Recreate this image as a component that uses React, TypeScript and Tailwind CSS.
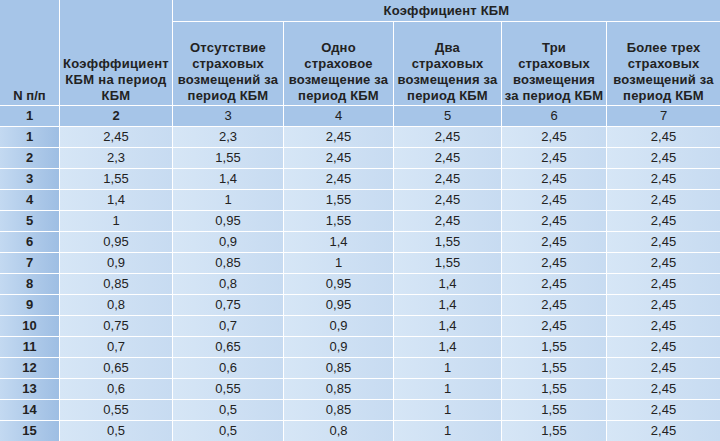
const headers: string[][] = [
  ['Отсутствие', 'страховых', 'возмещений за', 'период КБМ'],
  ['Одно', 'страховое', 'возмещение за', 'период КБМ'],
  ['Два', 'страховых', 'возмещения за', 'период КБМ'],
  ['Три', 'страховых', 'возмещения', 'за период КБМ'],
  ['Более трех', 'страховых', 'возмещений за', 'период КБМ'],
];

const rows: string[][] = [
  ['1', '2,45', '2,3', '2,45', '2,45', '2,45', '2,45'],
  ['2', '2,3', '1,55', '2,45', '2,45', '2,45', '2,45'],
  ['3', '1,55', '1,4', '2,45', '2,45', '2,45', '2,45'],
  ['4', '1,4', '1', '1,55', '2,45', '2,45', '2,45'],
  ['5', '1', '0,95', '1,55', '2,45', '2,45', '2,45'],
  ['6', '0,95', '0,9', '1,4', '1,55', '2,45', '2,45'],
  ['7', '0,9', '0,85', '1', '1,55', '2,45', '2,45'],
  ['8', '0,85', '0,8', '0,95', '1,4', '2,45', '2,45'],
  ['9', '0,8', '0,75', '0,95', '1,4', '2,45', '2,45'],
  ['10', '0,75', '0,7', '0,9', '1,4', '2,45', '2,45'],
  ['11', '0,7', '0,65', '0,9', '1,4', '1,55', '2,45'],
  ['12', '0,65', '0,6', '0,85', '1', '1,55', '2,45'],
  ['13', '0,6', '0,55', '0,85', '1', '1,55', '2,45'],
  ['14', '0,55', '0,5', '0,85', '1', '1,55', '2,45'],
  ['15', '0,5', '0,5', '0,8', '1', '1,55', '2,45'],
];

export default function App() {
  return (
    <div className="w-[720px] h-[441px] overflow-hidden bg-white font-['Liberation_Sans',Arial,sans-serif] text-[13px] text-[#222]">
      <div className="grid grid-cols-[59px_112px_110px_109px_107px_104px_1fr] grid-rows-[21px_83px_20px] auto-rows-[20px] gap-px bg-white">
        <div className="row-span-2 bg-[#a6c5e8] flex items-end justify-center pb-px font-bold leading-4">
          N п/п
        </div>
        <div className="row-span-2 bg-[#a6c5e8] flex items-end justify-center pb-px leading-4 text-center font-bold tracking-[0.3px]">
          <div>
            Коэфффициент
            <br />
            КБМ на период
            <br />
            КБМ
          </div>
        </div>
        <div className="col-span-5 bg-[#a6c5e8] flex items-center justify-center pt-px font-bold tracking-[0.2px]">
          Коэффициент КБМ
        </div>
        {headers.map((h, i) => (
          <div
            key={i}
            className="bg-[#a6c5e8] flex items-end justify-center pb-px leading-4 text-center font-bold tracking-[0.2px]"
          >
            <div>
              {h.map((line, j) => (
                <div key={j}>{line}</div>
              ))}
            </div>
          </div>
        ))}
        {['1', '2', '3', '4', '5', '6', '7'].map((n, i) => (
          <div
            key={n}
            className={`bg-[#a6c5e8] flex items-center justify-center ${i < 2 ? 'font-bold' : ''}`}
          >
            {n}
          </div>
        ))}
        {rows.map((r) =>
          r.map((v, i) =>
            i === 0 ? (
              <div
                key={r[0] + '-' + i}
                className="bg-gradient-to-r from-[#c3d9f1] to-[#9ebee3] flex items-center justify-center font-bold"
              >
                {v}
              </div>
            ) : (
              <div
                key={r[0] + '-' + i}
                className="bg-gradient-to-r from-[#d6e6f6] to-[#c7dbf1] flex items-center justify-center"
              >
                {v}
              </div>
            ),
          ),
        )}
      </div>
    </div>
  );
}
